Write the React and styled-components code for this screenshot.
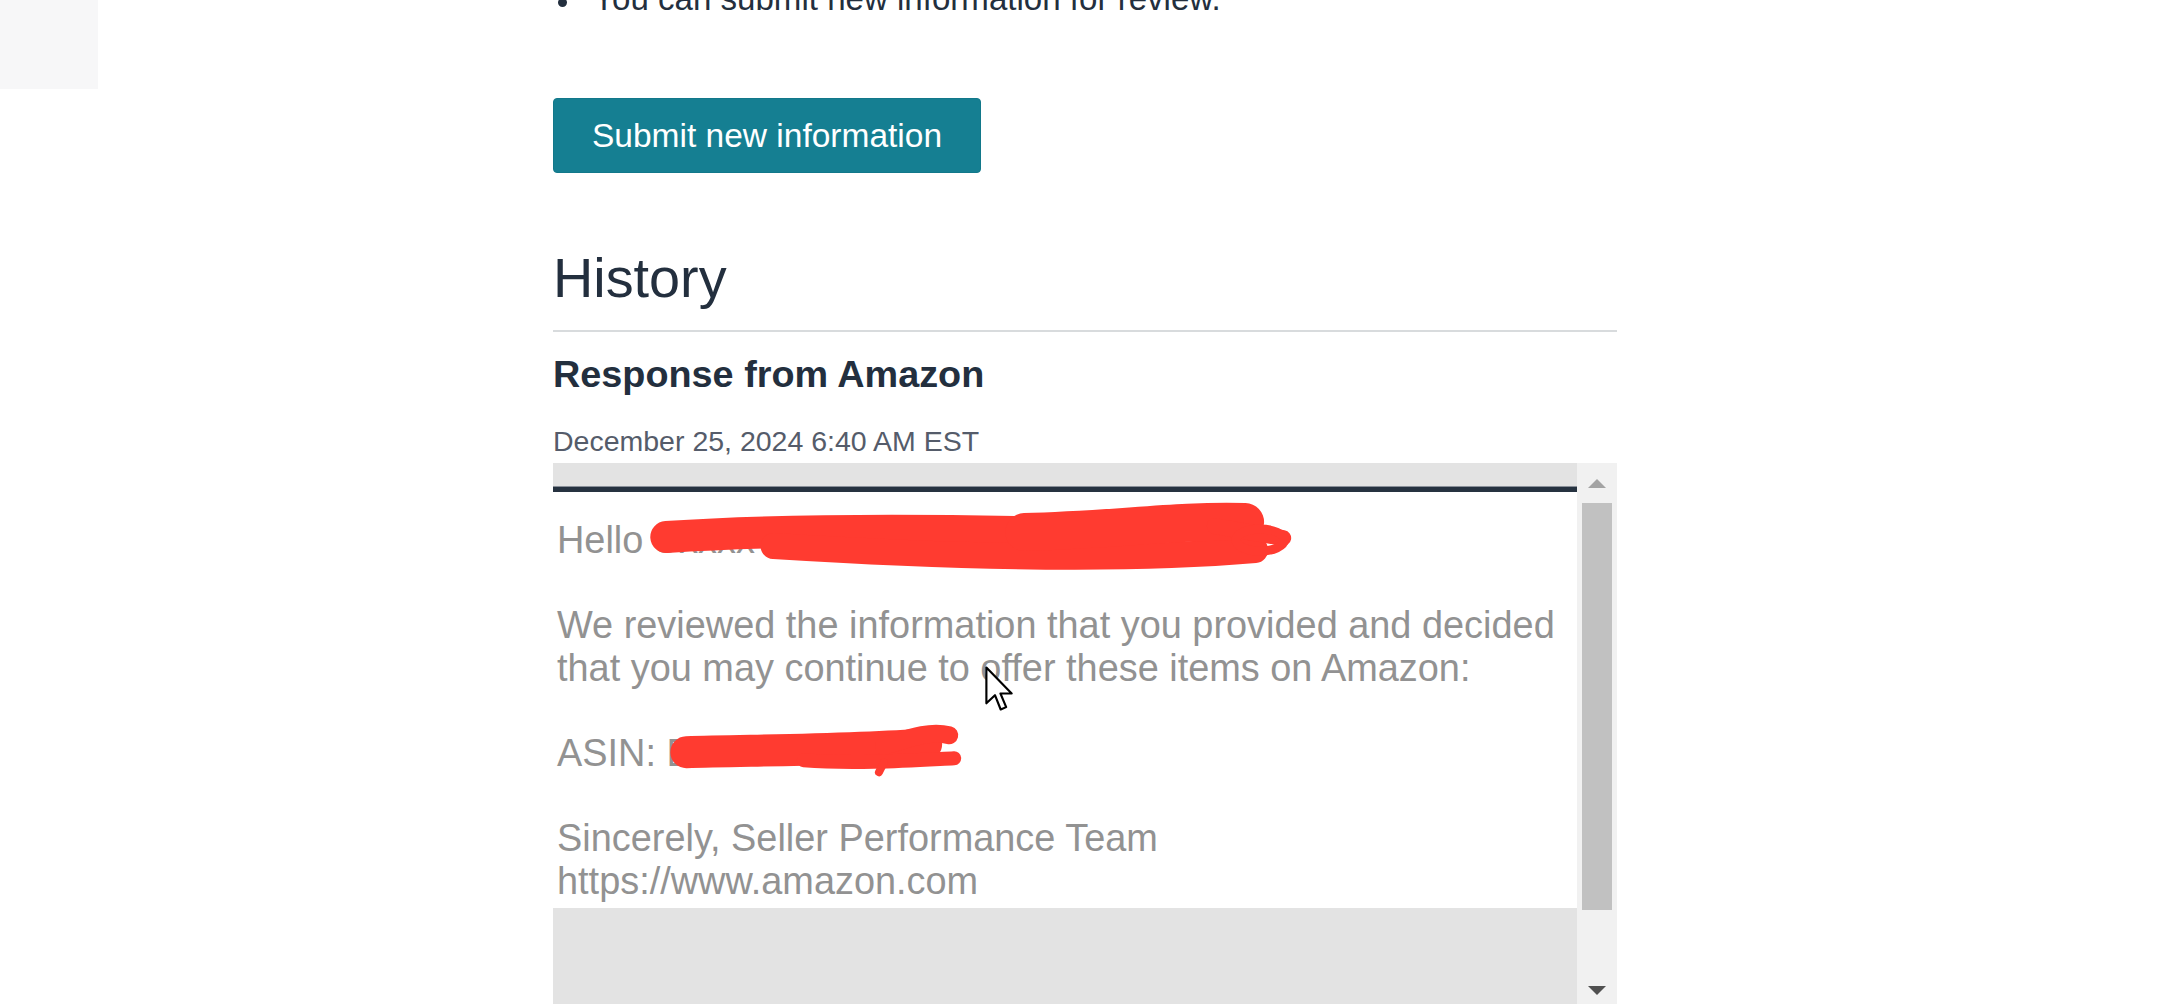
import React from "react";
import styled, { createGlobalStyle } from "styled-components";

const GlobalStyle = createGlobalStyle`
  html, body {
    margin: 0;
    padding: 0;
    overflow: hidden;
    background: #fff;
  }
  body {
    font-family: "Liberation Sans", Arial, sans-serif;
  }
`;

const Page = styled.div`
  display: flex;
  align-items: flex-start;
  width: 2174px;
`;

const SideNav = styled.div`
  width: 98px;
  height: 89px;
  background: #f7f7f8;
  flex-shrink: 0;
`;

const Main = styled.div`
  width: 1064px;
  margin-left: 455px;
  display: flex;
  flex-direction: column;
  align-items: flex-start;
`;

const BulletList = styled.ul`
  list-style: none;
  margin: -20px 0 0;
  padding: 0;
`;

const BulletItem = styled.li`
  display: flex;
  align-items: center;
  font-size: 33.1px;
  line-height: 38px;
  color: #232f3e;
`;

const Dot = styled.span`
  width: 9px;
  height: 9px;
  border-radius: 50%;
  background: #232f3e;
  margin: 6px 26px 0 5px;
  flex-shrink: 0;
`;

const PrimaryButton = styled.button`
  margin-top: 80px;
  height: 75px;
  padding: 0 38px;
  box-sizing: border-box;
  border: 1px solid #12788a;
  border-radius: 4px;
  background: #157f92;
  color: #fff;
  font-family: "Liberation Sans", Arial, sans-serif;
  font-size: 33.5px;
  line-height: 1;
  cursor: pointer;
`;

const SectionTitle = styled.h2`
  align-self: stretch;
  margin: 72px 0 0;
  padding-bottom: 20px;
  border-bottom: 2px solid #d8dbdd;
  font-size: 55.8px;
  font-weight: 400;
  line-height: 65px;
  color: #232f3e;
`;

const EntryTitle = styled.h3`
  margin: 20px 0 0;
  font-size: 37.8px;
  font-weight: 700;
  line-height: 44px;
  color: #232f3e;
`;

const EntryDate = styled.div`
  margin-top: 26px;
  font-size: 28.5px;
  line-height: 38px;
  color: #555c6a;
`;

const Frame = styled.div`
  align-self: stretch;
  margin-top: 3px;
  height: 547px;
  display: flex;
`;

const FrameBody = styled.div`
  flex: 1;
  display: flex;
  flex-direction: column;
  background: #e3e3e3;
`;

const TopBand = styled.div`
  height: 23px;
`;

const RuleBar = styled.div`
  height: 6px;
  background: #263240;
  border-top: 1px solid #8a9099;
  box-sizing: border-box;
`;

const Message = styled.div`
  position: relative;
  background: #fff;
  padding: 27px 8px 6px 4px;
  font-size: 37.9px;
  line-height: 42.6px;
  color: #929292;
  white-space: pre-line;
`;

const Overlay = styled.svg`
  position: absolute;
  left: 0;
  top: 0;
  width: 100%;
  height: 100%;
  pointer-events: none;
`;

const Cursor = styled.svg`
  position: absolute;
  left: 431px;
  top: 173px;
  width: 31px;
  height: 48px;
`;

const Scrollbar = styled.div`
  width: 40px;
  background: #f1f1f1;
  display: flex;
  flex-direction: column;
  align-items: center;
`;

const ScrollButton = styled.div`
  height: 40px;
  width: 100%;
  display: flex;
  align-items: center;
  justify-content: center;
`;

const Arrow = styled.span`
  width: 0;
  height: 0;
  border-left: 9px solid transparent;
  border-right: 9px solid transparent;
  ${(p) =>
    p.$down
      ? `border-top: 9px solid #505050;`
      : `border-bottom: 9px solid #a3a3a3;`}
`;

const Thumb = styled.div`
  width: 30px;
  height: 407px;
  background: #c1c1c1;
`;

const Track = styled.div`
  flex: 1;
`;

const messageText = `Hello Sxxxx Lxxxxx

We reviewed the information that you provided and decided that you may continue to offer these items on Amazon:

ASIN: B0XXXXXX

Sincerely, Seller Performance Team
https://www.amazon.com`;

function Redactions() {
  const red = "#ff3b30";
  return (
    <Overlay viewBox="0 0 1021 416" preserveAspectRatio="none">
      <g fill="none" stroke={red} strokeLinecap="round" strokeLinejoin="round">
        {/* greeting name */}
        <path d="M113 45 Q250 36 460 40" strokeWidth="32" />
        <path d="M220 54 C380 64 560 70 700 58" strokeWidth="26" />
        <path d="M470 40 C560 38 620 28 690 30" strokeWidth="38" />
        <path d="M660 34 L728 46" strokeWidth="16" />
        <ellipse cx="705" cy="48" rx="24" ry="11" strokeWidth="9" />
        {/* asin */}
        <path d="M133 260 C200 258 300 258 372 252" strokeWidth="32" />
        <path d="M330 254 C355 246 375 238 395 243" strokeWidth="18" />
        <path d="M250 268 C300 272 360 268 400 266" strokeWidth="14" />
        <path d="M330 270 L325 280" strokeWidth="8" />
      </g>
    </Overlay>
  );
}

function App() {
  return (
    <>
      <GlobalStyle />
      <Page>
        <SideNav />
        <Main>
          <BulletList>
            <BulletItem>
              <Dot />
              You can submit new information for review.
            </BulletItem>
          </BulletList>
          <PrimaryButton>Submit new information</PrimaryButton>
          <SectionTitle>History</SectionTitle>
          <EntryTitle>Response from Amazon</EntryTitle>
          <EntryDate>December 25, 2024 6:40 AM EST</EntryDate>
          <Frame>
            <FrameBody>
              <TopBand />
              <RuleBar />
              <Message>
                {messageText}
                <Redactions />
                <Cursor viewBox="0 0 13 20">
                  <path
                    d="M1 1 L1 16 L4.6 12.6 L7 18.6 L9.3 17.6 L6.9 11.9 L11.6 11.9 Z"
                    fill="#fff"
                    stroke="#000"
                    strokeWidth="0.9"
                    strokeLinejoin="round"
                  />
                </Cursor>
              </Message>
            </FrameBody>
            <Scrollbar>
              <ScrollButton>
                <Arrow />
              </ScrollButton>
              <Thumb />
              <Track />
              <ScrollButton>
                <Arrow $down />
              </ScrollButton>
            </Scrollbar>
          </Frame>
        </Main>
      </Page>
    </>
  );
}

export default App;
